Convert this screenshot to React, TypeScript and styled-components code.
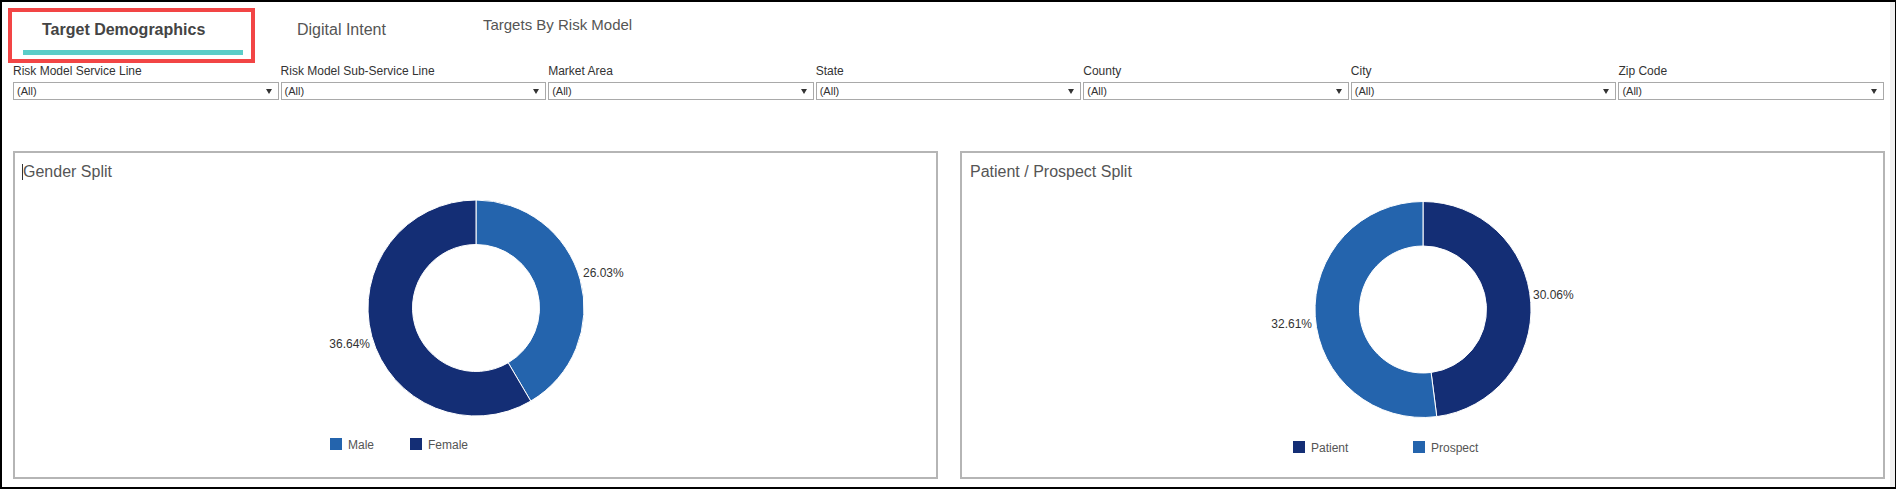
import React from 'react';
import styled, { createGlobalStyle } from 'styled-components';

const GlobalStyle = createGlobalStyle`
  html, body {
    margin: 0;
    padding: 0;
    background: #ffffff;
  }
  body {
    font-family: "Liberation Sans", Arial, sans-serif;
    color: #333;
  }
`;

const LIGHT = '#2464ad';
const DARK = '#142e75';

const Page = styled.div`
  width: 1896px;
  height: 489px;
  box-sizing: border-box;
  border: 2px solid #000;
  border-right-width: 1px;
  overflow: hidden;
  display: flex;
`;

const Content = styled.div`
  flex: 1;
  border-right: 5px solid #f0f0f0;
  display: flex;
  flex-direction: column;
  min-width: 0;
`;

const TabBar = styled.div`
  display: flex;
  align-items: flex-start;
  padding: 6px 0 0 6px;
  height: 55px;
`;

// red highlight frame drawn around the active tab in the screenshot
const Highlight = styled.div`
  border: 4px solid #f24545;
  padding: 0 8px 4px 11px;
`;

const ActiveTab = styled.div`
  box-sizing: border-box;
  width: 220px;
  padding: 8px 0 10px 19px;
  border-bottom: 5px solid #5bcdc8;
  font-size: 16px;
  line-height: 20px;
  font-weight: bold;
  color: #444;
  white-space: nowrap;
`;

const Tab = styled.div<{ $offset: number; $top: number; $size: number }>`
  margin-left: ${(p) => p.$offset}px;
  padding-top: ${(p) => p.$top}px;
  font-size: ${(p) => p.$size}px;
  line-height: 20px;
  color: #555;
  white-space: nowrap;
`;

const FilterGrid = styled.div`
  display: grid;
  grid-template-columns: repeat(7, 1fr);
  column-gap: 2px;
  margin: 1px 6px 0 11px;
`;

const Filter = styled.div`
  display: flex;
  flex-direction: column;
  min-width: 0;
`;

const FilterLabel = styled.div`
  font-size: 12px;
  line-height: 14px;
  color: #333;
  white-space: nowrap;
`;

const Select = styled.div`
  margin-top: 4px;
  height: 18px;
  box-sizing: border-box;
  border: 1px solid #a9a9a9;
  display: flex;
  align-items: center;
  justify-content: space-between;
  padding: 0 6px 0 3px;
  font-size: 11px;
  color: #333;
`;

const Arrow = styled.span`
  width: 0;
  height: 0;
  border-left: 3.5px solid transparent;
  border-right: 3.5px solid transparent;
  border-top: 5px solid #333;
`;

const CardRow = styled.div`
  display: flex;
  gap: 22px;
  margin-top: 51px;
  padding: 0 5px 0 11px;
`;

const Card = styled.div`
  flex: 1;
  height: 328px;
  box-sizing: border-box;
  border: 2px solid #b5b5b5;
  display: flex;
  flex-direction: column;
`;

const CardTitle = styled.div`
  padding: 10px 0 9px 8px;
  font-size: 16px;
  line-height: 18px;
  color: #555;
  display: flex;
  align-items: center;
`;

const Caret = styled.span`
  display: inline-block;
  width: 1px;
  height: 16px;
  margin-left: -1px;
  background: #333;
`;

const ChartSvg = styled.svg`
  display: block;
  margin: 0 auto;
  overflow: visible;
`;

type Slice = { value: number; color: string };
type Label = { text: string; x: number; y: number; anchor: 'start' | 'end' };
type LegendItem = { name: string; color: string; x: number };

type ChartDef = {
  title: string;
  caret?: boolean;
  cy: number;
  slices: Slice[];
  labels: Label[];
  legend: LegendItem[];
  legendY: number;
};

const SVG_W = 460;
const SVG_H = 280;
const CX = 230;
const R_OUT = 108;
const R_IN = 63.5;

const point = (cy: number, rad: number, deg: number) => {
  const a = (deg * Math.PI) / 180;
  return `${(CX + rad * Math.sin(a)).toFixed(2)} ${(cy - rad * Math.cos(a)).toFixed(2)}`;
};

const arcPath = (cy: number, a0: number, a1: number) => {
  const large = a1 - a0 > 180 ? 1 : 0;
  return [
    `M ${point(cy, R_OUT, a0)}`,
    `A ${R_OUT} ${R_OUT} 0 ${large} 1 ${point(cy, R_OUT, a1)}`,
    `L ${point(cy, R_IN, a1)}`,
    `A ${R_IN} ${R_IN} 0 ${large} 0 ${point(cy, R_IN, a0)}`,
    'Z',
  ].join(' ');
};

const Donut: React.FC<{ chart: ChartDef }> = ({ chart }) => {
  const total = chart.slices.reduce((s, x) => s + x.value, 0);
  let start = 0;
  return (
    <ChartSvg width={SVG_W} height={SVG_H} viewBox={`0 0 ${SVG_W} ${SVG_H}`}>
      {chart.slices.map((s, i) => {
        const end = start + (s.value / total) * 360;
        const d = arcPath(chart.cy, start, end);
        start = end;
        return <path key={i} d={d} fill={s.color} stroke="#fff" strokeWidth={1} />;
      })}
      {chart.labels.map((l) => (
        <text
          key={l.text}
          x={l.x}
          y={l.y}
          textAnchor={l.anchor}
          fontSize={12}
          fill="#333"
          fontFamily='"Liberation Sans", Arial, sans-serif'
        >
          {l.text}
        </text>
      ))}
      {chart.legend.map((g) => (
        <g key={g.name}>
          <rect x={g.x} y={chart.legendY} width={12} height={12} fill={g.color} />
          <text
            x={g.x + 18}
            y={chart.legendY + 11}
            fontSize={12}
            fill="#555"
            fontFamily='"Liberation Sans", Arial, sans-serif'
          >
            {g.name}
          </text>
        </g>
      ))}
    </ChartSvg>
  );
};

const filters = [
  'Risk Model Service Line',
  'Risk Model Sub-Service Line',
  'Market Area',
  'State',
  'County',
  'City',
  'Zip Code',
];

const charts: ChartDef[] = [
  {
    title: 'Gender Split',
    caret: true,
    cy: 118,
    slices: [
      { value: 26.03, color: LIGHT },
      { value: 36.64, color: DARK },
    ],
    labels: [
      { text: '26.03%', x: 337, y: 87, anchor: 'start' },
      { text: '36.64%', x: 124, y: 158, anchor: 'end' },
    ],
    legend: [
      { name: 'Male', color: LIGHT, x: 84 },
      { name: 'Female', color: DARK, x: 164 },
    ],
    legendY: 248,
  },
  {
    title: 'Patient / Prospect Split',
    cy: 119.5,
    slices: [
      { value: 30.06, color: DARK },
      { value: 32.61, color: LIGHT },
    ],
    labels: [
      { text: '30.06%', x: 340, y: 109, anchor: 'start' },
      { text: '32.61%', x: 119, y: 138, anchor: 'end' },
    ],
    legend: [
      { name: 'Patient', color: DARK, x: 100 },
      { name: 'Prospect', color: LIGHT, x: 220 },
    ],
    legendY: 251,
  },
];

const App: React.FC = () => {
  return (
    <>
      <GlobalStyle />
      <Page>
        <Content>
          <TabBar>
            <Highlight>
              <ActiveTab>Target Demographics</ActiveTab>
            </Highlight>
            <Tab $offset={42} $top={12} $size={16}>Digital Intent</Tab>
            <Tab $offset={97} $top={7} $size={15}>Targets By Risk Model</Tab>
          </TabBar>

          <FilterGrid>
            {filters.map((f) => (
              <Filter key={f}>
                <FilterLabel>{f}</FilterLabel>
                <Select>
                  <span>(All)</span>
                  <Arrow />
                </Select>
              </Filter>
            ))}
          </FilterGrid>

          <CardRow>
            {charts.map((c) => (
              <Card key={c.title}>
                <CardTitle>
                  {c.caret && <Caret />}
                  {c.title}
                </CardTitle>
                <Donut chart={c} />
              </Card>
            ))}
          </CardRow>
        </Content>
      </Page>
    </>
  );
};

export default App;
